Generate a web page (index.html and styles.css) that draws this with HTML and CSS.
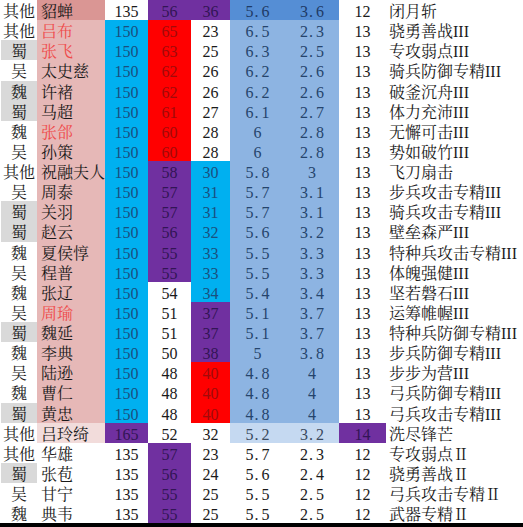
FILE: index.html
```html
<!DOCTYPE html>
<html lang="zh-CN">
<head>
<meta charset="utf-8">
<title>武将数据</title>
<link rel="stylesheet" href="styles.css">
</head>
<body>
<div class="sheet">
  <div class="row"><div class="fac">其他</div><div class="name pk-d">貂蝉</div><div class="num">135</div><div class="num bg-p">56</div><div class="num bg-p">36</div><div class="num bg-db">5<span class="dt">.</span>6</div><div class="num bg-db">3<span class="dt">.</span>6</div><div class="num">12</div><div class="skill">闭月斩</div></div>
  <div class="row"><div class="fac">其他</div><div class="name pk red">吕布</div><div class="num bg-b">150</div><div class="num bg-r">65</div><div class="num">23</div><div class="num bg-lb">6<span class="dt">.</span>5</div><div class="num bg-lb">2<span class="dt">.</span>3</div><div class="num">13</div><div class="skill">骁勇善战III</div></div>
  <div class="row"><div class="fac bg-g">蜀</div><div class="name pk red">张飞</div><div class="num bg-b">150</div><div class="num bg-r">63</div><div class="num">25</div><div class="num bg-lb">6<span class="dt">.</span>3</div><div class="num bg-lb">2<span class="dt">.</span>5</div><div class="num">13</div><div class="skill">专攻弱点III</div></div>
  <div class="row"><div class="fac">吴</div><div class="name pk">太史慈</div><div class="num bg-b">150</div><div class="num bg-r">62</div><div class="num">26</div><div class="num bg-lb">6<span class="dt">.</span>2</div><div class="num bg-lb">2<span class="dt">.</span>6</div><div class="num">13</div><div class="skill">骑兵防御专精III</div></div>
  <div class="row"><div class="fac bg-g">魏</div><div class="name pk">许褚</div><div class="num bg-b">150</div><div class="num bg-r">62</div><div class="num">26</div><div class="num bg-lb">6<span class="dt">.</span>2</div><div class="num bg-lb">2<span class="dt">.</span>6</div><div class="num">13</div><div class="skill">破釜沉舟III</div></div>
  <div class="row"><div class="fac bg-g">蜀</div><div class="name pk">马超</div><div class="num bg-b">150</div><div class="num bg-r">61</div><div class="num">27</div><div class="num bg-lb">6<span class="dt">.</span>1</div><div class="num bg-lb">2<span class="dt">.</span>7</div><div class="num">13</div><div class="skill">体力充沛III</div></div>
  <div class="row"><div class="fac">魏</div><div class="name pk red">张郃</div><div class="num bg-b">150</div><div class="num bg-r">60</div><div class="num">28</div><div class="num bg-lb">6</div><div class="num bg-lb">2<span class="dt">.</span>8</div><div class="num">13</div><div class="skill">无懈可击III</div></div>
  <div class="row"><div class="fac">吴</div><div class="name pk">孙策</div><div class="num bg-b">150</div><div class="num bg-r">60</div><div class="num">28</div><div class="num bg-lb">6</div><div class="num bg-lb">2<span class="dt">.</span>8</div><div class="num">13</div><div class="skill">势如破竹III</div></div>
  <div class="row"><div class="fac">其他</div><div class="name pk">祝融夫人</div><div class="num bg-b">150</div><div class="num bg-p">58</div><div class="num bg-b">30</div><div class="num bg-lb">5<span class="dt">.</span>8</div><div class="num bg-lb">3</div><div class="num">13</div><div class="skill">飞刀扇击</div></div>
  <div class="row"><div class="fac">吴</div><div class="name pk">周泰</div><div class="num bg-b">150</div><div class="num bg-p">57</div><div class="num bg-b">31</div><div class="num bg-lb">5<span class="dt">.</span>7</div><div class="num bg-lb">3<span class="dt">.</span>1</div><div class="num">13</div><div class="skill">步兵攻击专精III</div></div>
  <div class="row"><div class="fac bg-g">蜀</div><div class="name pk">关羽</div><div class="num bg-b">150</div><div class="num bg-p">57</div><div class="num bg-b">31</div><div class="num bg-lb">5<span class="dt">.</span>7</div><div class="num bg-lb">3<span class="dt">.</span>1</div><div class="num">13</div><div class="skill">骑兵攻击专精III</div></div>
  <div class="row"><div class="fac bg-g">蜀</div><div class="name pk">赵云</div><div class="num bg-b">150</div><div class="num bg-p">56</div><div class="num bg-b">32</div><div class="num bg-lb">5<span class="dt">.</span>6</div><div class="num bg-lb">3<span class="dt">.</span>2</div><div class="num">13</div><div class="skill">壁垒森严III</div></div>
  <div class="row"><div class="fac">魏</div><div class="name pk">夏侯惇</div><div class="num bg-b">150</div><div class="num bg-p">55</div><div class="num bg-b">33</div><div class="num bg-lb">5<span class="dt">.</span>5</div><div class="num bg-lb">3<span class="dt">.</span>3</div><div class="num">13</div><div class="skill">特种兵攻击专精III</div></div>
  <div class="row"><div class="fac">吴</div><div class="name pk">程普</div><div class="num bg-b">150</div><div class="num bg-p">55</div><div class="num bg-b">33</div><div class="num bg-lb">5<span class="dt">.</span>5</div><div class="num bg-lb">3<span class="dt">.</span>3</div><div class="num">13</div><div class="skill">体魄强健III</div></div>
  <div class="row"><div class="fac">魏</div><div class="name pk">张辽</div><div class="num bg-b">150</div><div class="num">54</div><div class="num bg-b">34</div><div class="num bg-lb">5<span class="dt">.</span>4</div><div class="num bg-lb">3<span class="dt">.</span>4</div><div class="num">13</div><div class="skill">坚若磐石III</div></div>
  <div class="row"><div class="fac">吴</div><div class="name pk red">周瑜</div><div class="num bg-b">150</div><div class="num">51</div><div class="num bg-p">37</div><div class="num bg-lb">5<span class="dt">.</span>1</div><div class="num bg-lb">3<span class="dt">.</span>7</div><div class="num">13</div><div class="skill">运筹帷幄III</div></div>
  <div class="row"><div class="fac bg-g">蜀</div><div class="name pk">魏延</div><div class="num bg-b">150</div><div class="num">51</div><div class="num bg-p">37</div><div class="num bg-lb">5<span class="dt">.</span>1</div><div class="num bg-lb">3<span class="dt">.</span>7</div><div class="num">13</div><div class="skill">特种兵防御专精III</div></div>
  <div class="row"><div class="fac">魏</div><div class="name pk">李典</div><div class="num bg-b">150</div><div class="num">50</div><div class="num bg-p">38</div><div class="num bg-lb">5</div><div class="num bg-lb">3<span class="dt">.</span>8</div><div class="num">13</div><div class="skill">步兵防御专精III</div></div>
  <div class="row"><div class="fac">吴</div><div class="name pk">陆逊</div><div class="num bg-b">150</div><div class="num">48</div><div class="num bg-r">40</div><div class="num bg-lb">4<span class="dt">.</span>8</div><div class="num bg-lb">4</div><div class="num">13</div><div class="skill">步步为营III</div></div>
  <div class="row"><div class="fac">魏</div><div class="name pk">曹仁</div><div class="num bg-b">150</div><div class="num">48</div><div class="num bg-r">40</div><div class="num bg-lb">4<span class="dt">.</span>8</div><div class="num bg-lb">4</div><div class="num">13</div><div class="skill">弓兵防御专精III</div></div>
  <div class="row"><div class="fac bg-g">蜀</div><div class="name pk">黄忠</div><div class="num bg-b">150</div><div class="num">48</div><div class="num bg-r">40</div><div class="num bg-lb">4<span class="dt">.</span>8</div><div class="num bg-lb">4</div><div class="num">13</div><div class="skill">弓兵攻击专精III</div></div>
  <div class="row"><div class="fac">其他</div><div class="name pk-l">吕玲绮</div><div class="num bg-p">165</div><div class="num">52</div><div class="num">32</div><div class="num bg-xb">5<span class="dt">.</span>2</div><div class="num bg-xb">3<span class="dt">.</span>2</div><div class="num bg-p">14</div><div class="skill">洗尽锋芒</div></div>
  <div class="row"><div class="fac">其他</div><div class="name">华雄</div><div class="num">135</div><div class="num bg-p">57</div><div class="num">23</div><div class="num">5<span class="dt">.</span>7</div><div class="num">2<span class="dt">.</span>3</div><div class="num">12</div><div class="skill">专攻弱点Ⅱ</div></div>
  <div class="row"><div class="fac bg-g">蜀</div><div class="name">张苞</div><div class="num">135</div><div class="num bg-p">56</div><div class="num">24</div><div class="num">5<span class="dt">.</span>6</div><div class="num">2<span class="dt">.</span>4</div><div class="num">12</div><div class="skill">骁勇善战Ⅱ</div></div>
  <div class="row"><div class="fac">吴</div><div class="name">甘宁</div><div class="num">135</div><div class="num bg-p">55</div><div class="num">25</div><div class="num">5<span class="dt">.</span>5</div><div class="num">2<span class="dt">.</span>5</div><div class="num">12</div><div class="skill">弓兵攻击专精Ⅱ</div></div>
  <div class="row"><div class="fac">魏</div><div class="name">典韦</div><div class="num">135</div><div class="num bg-p">55</div><div class="num">25</div><div class="num">5<span class="dt">.</span>5</div><div class="num">2<span class="dt">.</span>5</div><div class="num">12</div><div class="skill">武器专精Ⅱ</div></div>
</div>
<div class="bottom-rule"></div>
</body>
</html>
```
FILE: styles.css
```css
html, body {
  margin: 0;
  padding: 0;
  background: #ffffff;
}
body {
  width: 523px;
  height: 527px;
  overflow: hidden;
  font-family: "Liberation Serif", "Noto Serif CJK SC", "Noto Sans CJK SC", serif;
  font-size: 16px;
  color: #1a1a1a;
}
.sheet {
  display: flex;
  flex-direction: column;
}
.row {
  display: grid;
  grid-template-columns: 37px 68px 43px 43px 39px 55px 54px 47px 1fr;
  height: 20.13px;
}
.row > div {
  line-height: 20px;
  padding-top: 2px;
  box-sizing: border-box;
  height: 100%;
  overflow: hidden;
  white-space: nowrap;
}
.fac {
  text-align: center;
  border-left: 1px solid #ffffff;
}
.name {
  padding-left: 4px;
}
.num {
  text-align: center;
}
.skill {
  padding-left: 3px;
}
.dt {
  display: inline-block;
  width: 0.5em;
  text-align: left;
  padding-left: 1px;
  box-sizing: border-box;
}
.red { color: #ef4a4a; }
.pk { background: #e6b8b7; }
.pk-d { background: #da9694; }
.pk-l { background: #f2dcdb; }
.bg-g { background: #d9d9d9; }
.bg-b { background: #00b0f0; color: #1b4f7e; }
.bg-r { background: #ff0000; color: #a00a0a; }
.bg-p { background: #7030a0; color: #321555; }
.bg-lb { background: #8db4e2; color: #25446c; }
.bg-db { background: #558ed5; color: #1e3a66; }
.bg-xb { background: #c5d9f1; color: #3a4a5e; }
.bottom-rule {
  height: 4px;
  background: #000000;
}
```
